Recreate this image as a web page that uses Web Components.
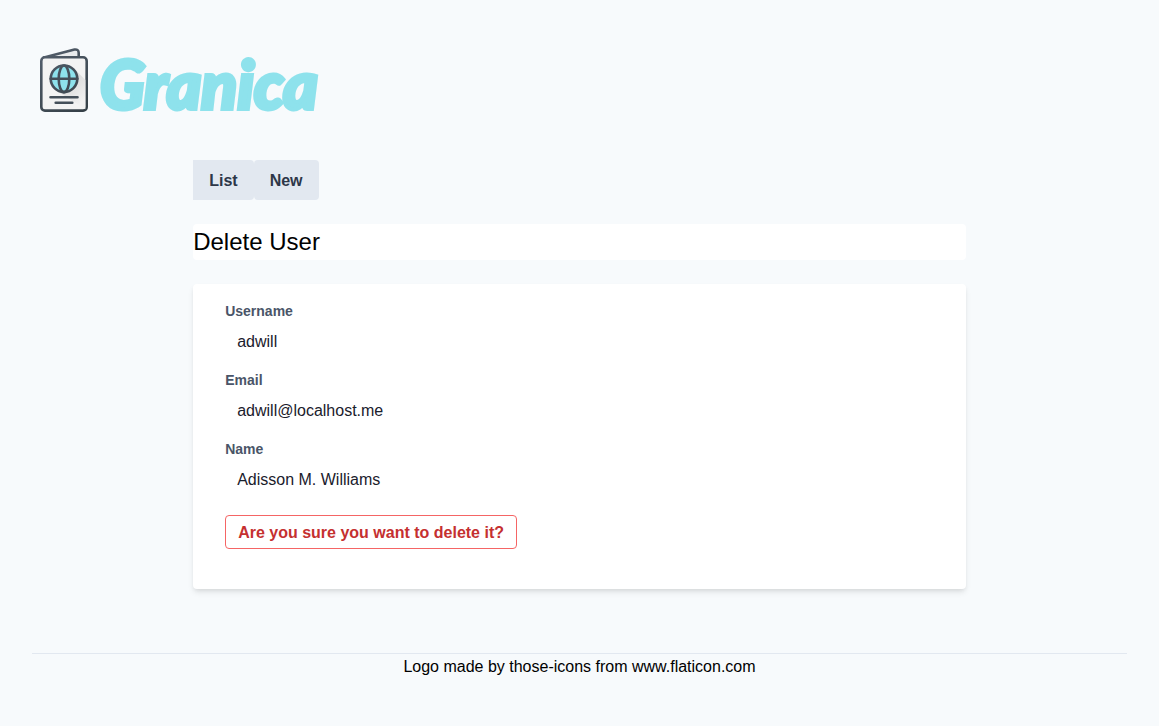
<!DOCTYPE html>
<html lang="en">
<head>
<meta charset="utf-8">
<meta name="viewport" content="width=device-width, initial-scale=1">
<title>Granica - Delete User</title>
<style>
body { margin: 0; background: #f7fafc; color: #000; font-family: "Liberation Sans", Arial, sans-serif; font-size: 16px; line-height: 24px; }
</style>
</head>
<body>
<granica-page>
  <granica-logo slot="header"></granica-logo>
  <granica-nav></granica-nav>
  <granica-heading>Delete User</granica-heading>
  <granica-card>
    <granica-field><span slot="label">Username</span>adwill</granica-field>
    <granica-field><span slot="label">Email</span>adwill@localhost.me</granica-field>
    <granica-field><span slot="label">Name</span>Adisson M. Williams</granica-field>
    <granica-confirm>Are you sure you want to delete it?</granica-confirm>
  </granica-card>
  <span slot="footer">Logo made by those-icons from www.flaticon.com</span>
</granica-page>
<script>
const define = (name, html) => {
  const template = document.createElement('template');
  template.innerHTML = html;
  customElements.define(name, class extends HTMLElement {
    constructor() {
      super();
      this.attachShadow({ mode: 'open' }).append(template.content.cloneNode(true));
    }
  });
};

define('granica-page', `
<style>
:host { display: block; padding: 48px 0; }
header { padding: 0 40px; }
main { display: flex; flex-direction: column; gap: 24px; width: calc(100% * 2 / 3); margin: 48px auto 64px; }
footer { margin: 0 32px; padding-top: 1px; border-top: 1px solid #e2e8f0; text-align: center; line-height: 23px; }
</style>
<header><slot name="header"></slot></header>
<main><slot></slot></main>
<footer><slot name="footer"></slot></footer>`);

define('granica-logo', `
<style>
:host { display: block; }
a { display: inline-flex; gap: 12px; height: 64px; color: #8ee2ec; text-decoration: none; vertical-align: top; }
svg { flex: none; width: 48px; height: 64px; }
span { font: italic 900 66px/72px Lato, sans-serif; -webkit-text-stroke: 4px currentColor; }
</style>
<a href="#" aria-label="Granica">
<svg viewBox="0 0 48 64" fill="none" stroke="#444f59" stroke-width="2.6" stroke-linecap="round" stroke-linejoin="round" aria-hidden="true">
  <defs>
    <linearGradient id="ink" x1="0" y1="0" x2="48" y2="64" gradientUnits="userSpaceOnUse"><stop stop-color="#55606e"/><stop offset="1" stop-color="#333e45"/></linearGradient>
    <linearGradient id="shade" x1="26" y1="30" x2="46" y2="50" gradientUnits="userSpaceOnUse"><stop stop-color="#d5d5d5"/><stop offset="1" stop-color="#f1f1f1"/></linearGradient>
  </defs>
  <g stroke="url(#ink)">
  <path d="M4 9.5 34.5 1.5Q38.7 1 38.7 5V9.3H4Z" fill="#e8eaec"/>
  <rect x="1.3" y="9.3" width="45.4" height="53.3" rx="3.6" fill="#f3f3f3"/>
  <path d="M34 20.5 45.4 32V61.2L14 41Z" fill="url(#shade)" stroke="none"/>
  <circle cx="24" cy="30.8" r="13.3" fill="#8ee2ec"/>
  <ellipse cx="24" cy="30.8" rx="5.3" ry="13.3"/>
  </g>
  <path d="M10.7 30.8H37.3M10.5 49.3H37.5M15.7 54.7H32.3"/>
</svg><span>Granica</span></a>`);

define('granica-nav', `
<style>
:host { display: block; }
nav { display: flex; }
a { padding: 9px 16px 7px; background: #e2e8f0; color: #2d3748; font-weight: 700; text-decoration: none; border-radius: 0 4px 4px 0; }
a + a { border-radius: 4px; }
</style>
<nav><a href="#list">List</a><a href="#new">New</a></nav>`);

define('granica-heading', `
<style>
:host { display: block; }
h1 { margin: 0; background: #fff; border-radius: 4px; font-size: 24px; font-weight: 400; line-height: 36px; }
</style>
<h1><slot></slot></h1>`);

define('granica-card', `
<style>
:host { display: block; padding: 17px 32px 40px; background: #fff; border-radius: 4px; box-shadow: 0 4px 6px -1px rgba(0,0,0,.1), 0 2px 4px -1px rgba(0,0,0,.06); }
</style>
<slot></slot>`);

define('granica-field', `
<style>
:host { display: block; margin-bottom: 8px; }
dl, dd { margin: 0; }
dt { color: #4a5568; font-size: 14px; font-weight: 700; line-height: 21px; }
dd { padding: 8px 12px; color: #1a202c; }
</style>
<dl><dt><slot name="label"></slot></dt><dd><slot></slot></dd></dl>`);

define('granica-confirm', `
<style>
:host { display: flex; padding-top: 7px; }
button { margin: 0; padding: 5px 12px 3px; border: 1px solid #f56565; border-radius: 4px; background: transparent; color: #c53030; font: inherit; font-weight: 700; cursor: pointer; }
</style>
<button type="button"><slot></slot></button>`);
</script>
</body>
</html>
